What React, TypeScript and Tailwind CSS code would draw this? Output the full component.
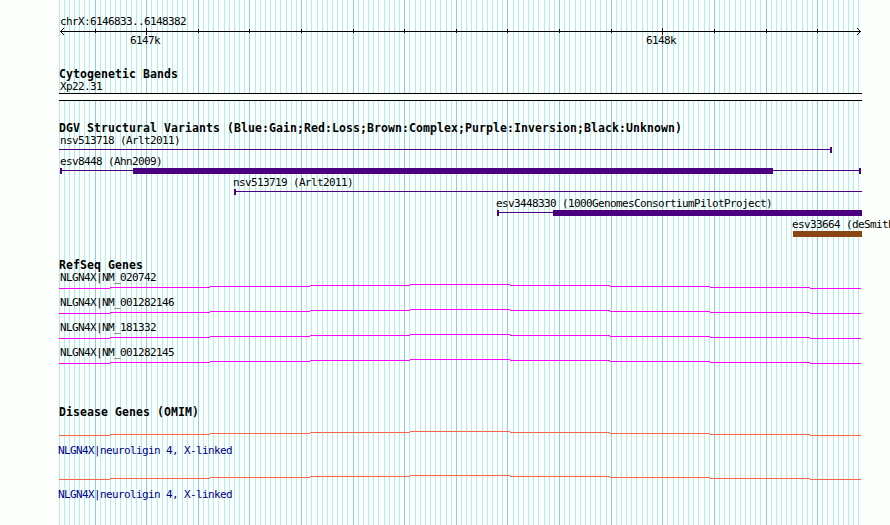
import clsx from 'clsx';

const LEFT = 59;
const HEIGHT = 525;
const WIDTH = 890;

// one grid line for every 10 bp, a stronger one for every 100 bp
const ORIGIN = 146.69;
const STEP = 5.161;

const gridLines = Array.from({ length: 156 }, (_, i) => {
  const k = i - 17;
  return {
    x: Math.max(LEFT, Math.floor(ORIGIN + k * STEP)),
    major: k % 10 === 0,
    labelled: k % 100 === 0,
  };
});

interface Variant {
  name: string;
  indent: string;
  color: string;
  line?: [number, number];
  bar?: [number, number];
  caps: number[];
}

const variants: Variant[] = [
  { name: 'nsv513718 (Arlt2011)', indent: 'pl-[60px]', color: '#4b0082', line: [59, 831], caps: [830] },
  { name: 'esv8448 (Ahn2009)', indent: 'pl-[60px]', color: '#4b0082', line: [60, 861], bar: [133, 773], caps: [60, 859] },
  { name: 'nsv513719 (Arlt2011)', indent: 'pl-[233px]', color: '#4b0082', line: [234, 862], caps: [234] },
  {
    name: 'esv3448330 (1000GenomesConsortiumPilotProject)',
    indent: 'pl-[496px]',
    color: '#4b0082',
    line: [497, 553],
    bar: [553, 862],
    caps: [497],
  },
  { name: 'esv33664 (deSmith2004)', indent: 'pl-[792px]', color: '#8b4513', bar: [793, 862], caps: [] },
];

const transcripts = ['NM_020742', 'NM_001282146', 'NM_181332', 'NM_001282145'];

const intronSteps = [
  [59, 110, 4],
  [110, 210, 3],
  [210, 310, 2],
  [310, 410, 1],
  [410, 510, 0],
  [510, 610, 1],
  [610, 710, 2],
  [710, 810, 3],
  [810, 861, 4],
];

function Grid() {
  return (
    <svg className="absolute inset-0" width={WIDTH} height={HEIGHT} shapeRendering="crispEdges">
      {gridLines.map((line, i) => (
        <rect key={i} x={line.x} y={0} width={1} height={HEIGHT} fill={line.major ? '#87ceeb' : '#afeeee'} />
      ))}
    </svg>
  );
}

function Label({ text, className }: { text: string; className?: string }) {
  return (
    <div className={clsx('h-3 pt-px text-[11px] leading-3 tracking-[-0.622px] whitespace-pre', className)}>
      {text}
    </div>
  );
}

function Title({ text }: { text: string }) {
  return (
    <h2 className="h-3 pl-[59px] text-[11.5px] leading-3 font-bold tracking-[0.077px] whitespace-pre">{text}</h2>
  );
}

function Ruler() {
  return (
    <svg className="block" width={WIDTH} height={7} shapeRendering="crispEdges">
      <rect x={60} y={3} width={801} height={1} />
      {gridLines
        .filter((line) => line.major)
        .map(({ x, labelled }) => (
          <rect key={x} x={x} y={labelled ? 0 : 1} width={1} height={labelled ? 7 : 4} />
        ))}
      {[1, 2, 3].map((d) => (
        <g key={d}>
          <rect x={60 + d} y={3 - d} width={1} height={1} />
          <rect x={60 + d} y={3 + d} width={1} height={1} />
          <rect x={860 - d} y={3 - d} width={1} height={1} />
          <rect x={860 - d} y={3 + d} width={1} height={1} />
        </g>
      ))}
    </svg>
  );
}

function VariantRow({ variant }: { variant: Variant }) {
  const { name, indent, color, line, bar, caps } = variant;
  return (
    <div className="h-[21px]">
      <Label text={name} className={indent} />
      <svg className="mt-px block" width={WIDTH} height={6} fill={color} shapeRendering="crispEdges">
        {line && <rect x={line[0]} y={2} width={line[1] - line[0]} height={1} />}
        {bar && <rect x={bar[0]} y={0} width={bar[1] - bar[0]} height={6} />}
        {caps.map((x) => (
          <rect key={x} x={x} y={0} width={2} height={6} />
        ))}
      </svg>
    </div>
  );
}

function Intron({ color }: { color: string }) {
  return (
    <svg className="block" width={WIDTH} height={5} fill={color} shapeRendering="crispEdges">
      {intronSteps.map(([start, end, y]) => (
        <rect key={start} x={start} y={y} width={end - start} height={1} />
      ))}
    </svg>
  );
}

export default function App() {
  return (
    <div className="relative h-[525px] w-[890px] overflow-hidden bg-[#fdfffc] font-['DejaVu_Sans_Mono',monospace] text-black">
      <Grid />
      <main className="relative flex flex-col pt-[15px]">
        <section className="h-[53px]">
          <Label text="chrX:6146833..6148382" className="pl-[60px]" />
          <div className="mt-px">
            <Ruler />
          </div>
          <div className="-mt-px flex pl-[130px]">
            <Label text="6147k" className="w-[516px]" />
            <Label text="6148k" />
          </div>
        </section>

        <section className="h-[54px]">
          <Title text="Cytogenetic Bands" />
          <Label text="Xp22.31" className="pl-[60px]" />
          <div className="mt-px ml-[59px] h-2 w-[803px] border-y border-black bg-[#fdfffc]" />
        </section>

        <section className="h-[137px]">
          <Title text="DGV Structural Variants (Blue:Gain;Red:Loss;Brown:Complex;Purple:Inversion;Black:Unknown)" />
          {variants.map((variant) => (
            <VariantRow key={variant.name} variant={variant} />
          ))}
        </section>

        <section className="h-[147px]">
          <Title text="RefSeq Genes" />
          {transcripts.map((id) => (
            <div key={id} className="h-[25px]">
              <Label text={`NLGN4X|${id}`} className="mb-px pl-[60px]" />
              <Intron color="#ff00ff" />
            </div>
          ))}
        </section>

        <section>
          <Title text="Disease Genes (OMIM)" />
          <div className="mt-[13px] flex flex-col gap-[19px]">
            {[0, 1].map((n) => (
              <div key={n} className="h-[25px]">
                <Intron color="#ff6347" />
                <Label text="NLGN4X|neuroligin 4, X-linked" className="mt-2 pl-[58px] text-[#00008b]" />
              </div>
            ))}
          </div>
        </section>
      </main>
    </div>
  );
}
